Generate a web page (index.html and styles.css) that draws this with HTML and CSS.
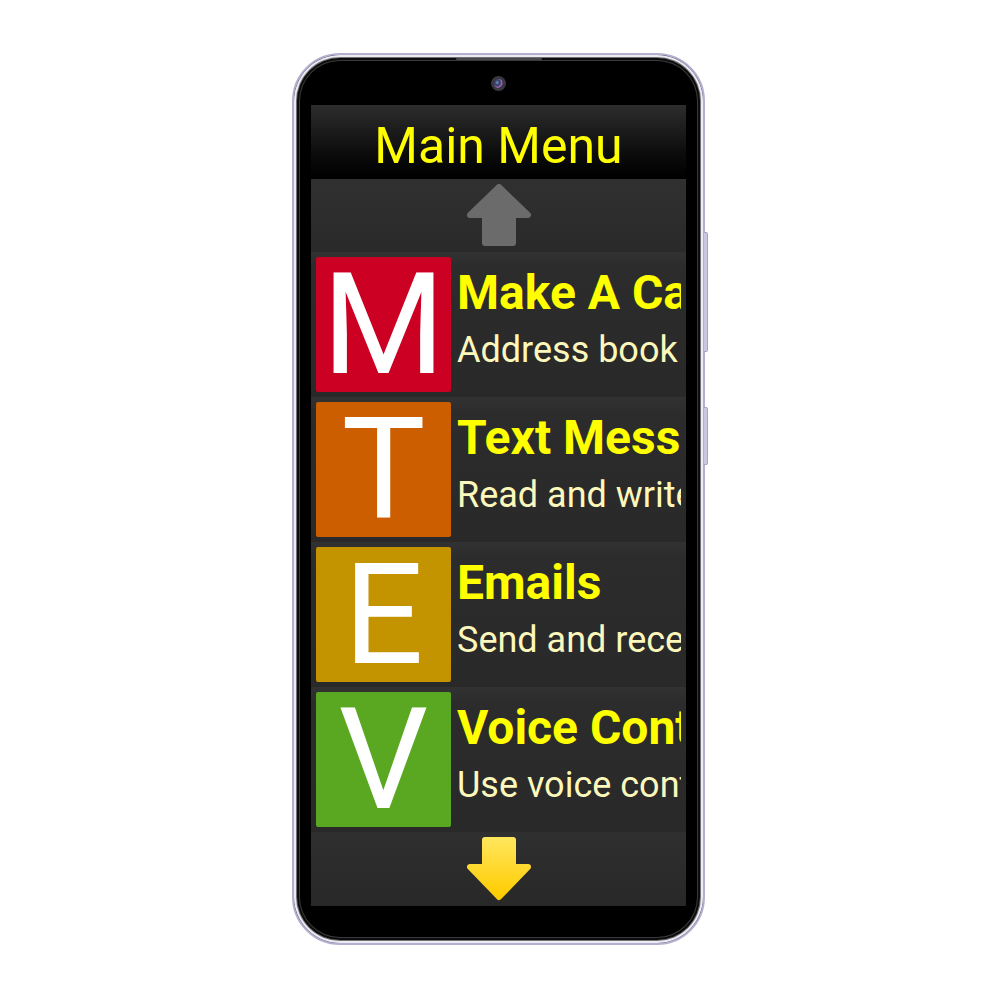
FILE: index.html
```html
<!DOCTYPE html>
<html lang="en">
<head>
<meta charset="utf-8">
<title>Main Menu</title>
<link rel="stylesheet" href="styles.css">
</head>
<body>
<div class="phone">
  <div class="speaker"></div>
  <div class="camera"><div class="lens"></div></div>
  <div class="side-btn btn-vol"></div>
  <div class="side-btn btn-power"></div>
  <div class="screen">
    <header class="header">Main Menu</header>
    <div class="nav-band">
      <svg class="arrow" width="64" height="64" viewBox="0 0 64 64">
        <polygon points="32,3 61,31 46,31 46,59 18,59 18,31 3,31" fill="#6b6b6b" stroke="#6b6b6b" stroke-width="6" stroke-linejoin="round"/>
      </svg>
    </div>
    <div class="row">
      <div class="tile tile-red">M</div>
      <div class="info">
        <div class="title">Make A Call</div>
        <div class="sub">Address book and calls</div>
      </div>
    </div>
    <div class="row">
      <div class="tile tile-orange">T</div>
      <div class="info">
        <div class="title">Text Messages</div>
        <div class="sub">Read and write messages</div>
      </div>
    </div>
    <div class="row">
      <div class="tile tile-gold">E</div>
      <div class="info">
        <div class="title">Emails</div>
        <div class="sub">Send and receive emails</div>
      </div>
    </div>
    <div class="row">
      <div class="tile tile-green">V</div>
      <div class="info">
        <div class="title">Voice Control</div>
        <div class="sub">Use voice control</div>
      </div>
    </div>
    <div class="nav-band nav-bottom">
      <svg class="arrow" width="64" height="64" viewBox="0 0 64 64">
        <defs>
          <linearGradient id="yg" x1="0" y1="0" x2="0" y2="1">
            <stop offset="0" stop-color="#ffe55a"/>
            <stop offset="1" stop-color="#ffcc00"/>
          </linearGradient>
        </defs>
        <polygon points="18,3 46,3 46,30 61,30 32,60 3,30 18,30" fill="url(#yg)" stroke="url(#yg)" stroke-width="6" stroke-linejoin="round"/>
      </svg>
    </div>
  </div>
</div>
</body>
</html>
```
FILE: styles.css
```css
html, body {
  margin: 0;
  padding: 0;
  background: #ffffff;
}
body {
  padding-top: 53px;
  font-family: Roboto, "Noto Sans", "Liberation Sans", sans-serif;
}
.phone {
  position: relative;
  box-sizing: border-box;
  width: 413px;
  height: 892px;
  margin-left: 292px;
  padding: 50px 17px 37px 17px;
  border: 2px solid #b6aed0;
  border-radius: 48px;
  background: #000;
  box-shadow:
    inset 0 0 0 2px #ecebf1,
    inset 0 0 0 3px #707075,
    inset 0 0 0 5px #0c0c0c,
    inset 0 0 0 6px #3a3a3c;
}
.speaker {
  position: absolute;
  top: 3px;
  left: 162px;
  width: 86px;
  height: 2px;
  border-radius: 1px;
  background: #4a4a4e;
}
.camera {
  position: absolute;
  top: 21px;
  left: 197px;
  width: 15px;
  height: 15px;
  border-radius: 50%;
  background: #38383e;
  display: flex;
  align-items: center;
  justify-content: center;
}
.lens {
  width: 9px;
  height: 9px;
  border-radius: 50%;
  background: radial-gradient(circle at 35% 40%, #5fa0c0 0, #3a3060 35%, #a070c0 60%, #15151c 80%);
}
.side-btn {
  position: absolute;
  right: -5px;
  width: 3px;
  background: #cdc6e0;
  border: 1px solid #aaa2c4;
  border-left: none;
  border-radius: 0 2px 2px 0;
}
.btn-vol {
  top: 177px;
  height: 118px;
}
.btn-power {
  top: 352px;
  height: 56px;
}
.screen {
  width: 375px;
  height: 801px;
  overflow: hidden;
  background: #2b2b2b;
  display: flex;
  flex-direction: column;
}
.header {
  box-sizing: border-box;
  height: 74px;
  flex: none;
  padding-top: 11px;
  font-size: 50px;
  line-height: 60px;
  color: #ffff00;
  text-align: center;
  background: linear-gradient(#2d2d2d, #0a0a0a 70%, #000);
}
.nav-band {
  flex: none;
  height: 73px;
  display: flex;
  align-items: center;
  justify-content: center;
  background: linear-gradient(#303030, #2a2a2a);
}
.nav-bottom {
  height: 74px;
  background: linear-gradient(#2f2f2f, #282828);
}
.arrow {
  display: block;
}
.row {
  flex: none;
  box-sizing: border-box;
  height: 145px;
  padding: 5px;
  display: flex;
  gap: 6px;
  background: linear-gradient(#323232, #2c2c2c 10%, #292929);
}
.tile {
  flex: none;
  width: 135px;
  height: 135px;
  border-radius: 2px;
  display: flex;
  align-items: center;
  justify-content: center;
  color: #ffffff;
  font-size: 141px;
  line-height: 110px;
}
.tile-red { background: #cc0022; }
.tile-orange { background: #cc5e00; }
.tile-gold { background: #c49300; }
.tile-green { background: #5aa821; }
.info {
  min-width: 0;
  overflow: hidden;
  white-space: nowrap;
  padding-top: 8px;
}
.title {
  font-size: 48px;
  font-weight: 700;
  line-height: 56px;
  color: #ffff00;
}
.sub {
  margin-top: 8px;
  font-size: 36px;
  line-height: 42px;
  color: #fcf8bc;
}
```
